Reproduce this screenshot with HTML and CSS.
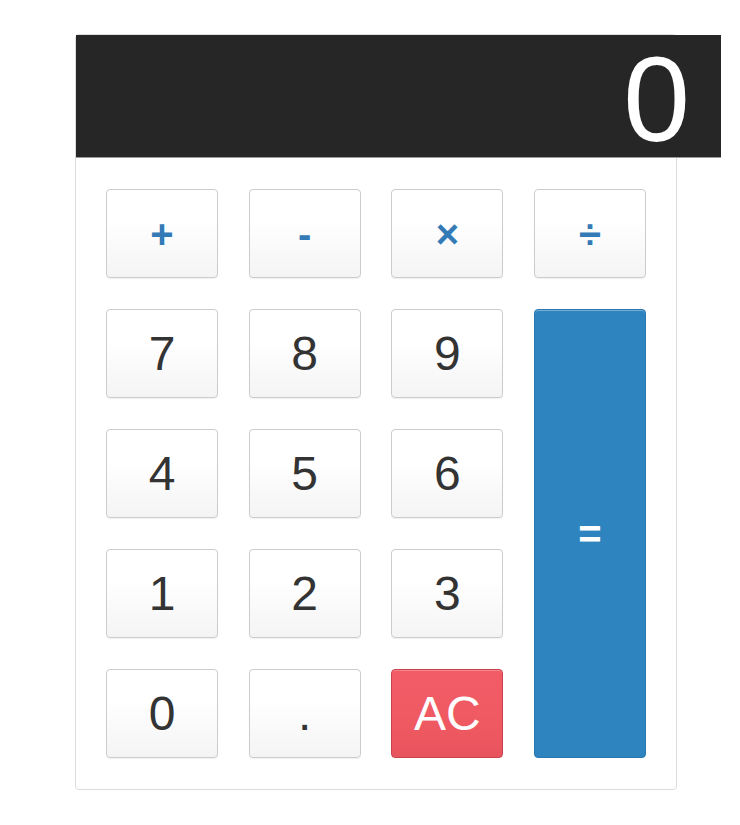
FILE: index.html
```html
<!DOCTYPE html>
<html>
<head>
<meta charset="utf-8">
<link rel="stylesheet" href="styles.css">
</head>
<body>
<div class="calc">
  <div class="display"><span class="value">0</span></div>
  <div class="keys">
    <button class="btn op">+</button>
    <button class="btn op">-</button>
    <button class="btn op">×</button>
    <button class="btn op">÷</button>
    <button class="btn">7</button>
    <button class="btn">8</button>
    <button class="btn">9</button>
    <button class="btn equals">=</button>
    <button class="btn">4</button>
    <button class="btn">5</button>
    <button class="btn">6</button>
    <button class="btn">1</button>
    <button class="btn">2</button>
    <button class="btn">3</button>
    <button class="btn">0</button>
    <button class="btn">.</button>
    <button class="btn clear">AC</button>
  </div>
</div>
</body>
</html>
```
FILE: styles.css
```css
html, body {
  margin: 0;
  padding: 0;
  background: #fff;
  overflow: hidden;
  font-family: "Liberation Sans", Arial, sans-serif;
}
.calc {
  margin: 34px 0 0 75px;
  width: 600px;
  border: 1px solid #dcdcdc;
  border-radius: 4px;
  background: #fff;
}
.display {
  width: 645px;
  box-sizing: border-box;
  height: 123px;
  background: #262626;
  border-bottom: 1px solid #9a9a9a;
  color: #fff;
  padding: 0 31px 0 0;
  display: flex;
  justify-content: flex-end;
  align-items: center;
}
.value {
  font-size: 120px;
  line-height: 110px;
  padding-top: 6px;
}
.keys {
  display: grid;
  grid-template-columns: repeat(4, 112px);
  grid-template-rows: repeat(5, 89px);
  column-gap: 30.67px;
  row-gap: 31px;
  padding: 31px 30px 31px 30px;
}
.btn {
  margin: 0;
  padding: 0;
  font-family: "Liberation Sans", Arial, sans-serif;
  font-size: 48px;
  line-height: 1;
  color: #333;
  border: 1px solid #ccc;
  border-radius: 4px;
  background: linear-gradient(to bottom, #ffffff 0%, #ffffff 35%, #f4f4f4 100%);
  box-shadow: 0 1px 1px rgba(0,0,0,0.06);
  display: flex;
  align-items: center;
  justify-content: center;
}
.op {
  color: #337ab7;
  font-weight: bold;
  font-size: 40px;
}
.equals {
  grid-column: 4;
  grid-row: 2 / span 4;
  color: #fff;
  background: #2e84be;
  border: 1px solid #2a78ad;
  box-shadow: inset 0 1px 0 rgba(255,255,255,0.35);
  font-weight: bold;
  font-size: 40px;
}
.clear {
  color: #fff;
  background: linear-gradient(to bottom, #f25c66 0%, #f05a63 50%, #e8545d 100%);
  border: 1px solid #c9434c;
  box-shadow: inset 0 1px 0 rgba(255,255,255,0.25);
}
```
